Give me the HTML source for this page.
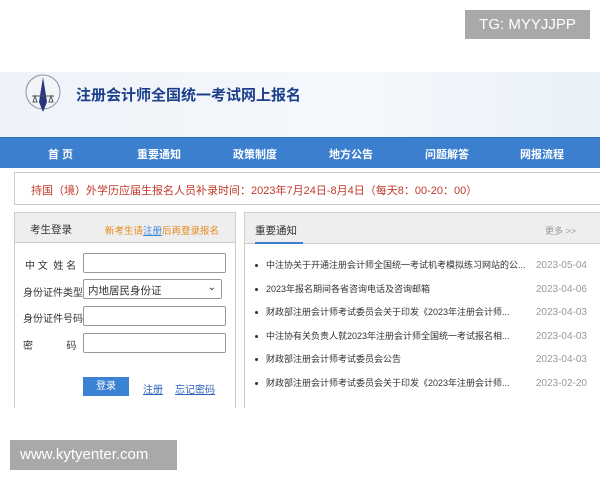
<!DOCTYPE html>
<html><head><meta charset="utf-8"><style>
*{margin:0;padding:0;box-sizing:border-box}
body{width:600px;height:480px;background:#fff;font-family:"Liberation Sans","Noto Sans CJK SC",sans-serif;position:relative;overflow:hidden;font-size:10px;color:#333}
.abs{position:absolute}
#hdr{left:0;top:72px;width:600px;height:66px;background:linear-gradient(90deg,#eef3f9,#f5f8fc 60%,#e9f0f8)}
#nav{left:0;top:137px;width:600px;height:31px;background:#3c7fcf;border-top:1px solid #2f6fbf}
#nav span{position:absolute;top:8px;color:#fff;font-weight:bold;font-size:11px}
#notice{left:14px;top:172px;width:600px;height:33px;border:1px solid #ccc;background:#fff;color:#c0392b;font-size:11px;padding:9px 0 0 16px}
#lp{left:14px;top:212px;width:222px;height:200px;border:1px solid #ccc;border-bottom:none}
#lph{height:30px;background:#eee;border-bottom:1px solid #ccc;position:relative}
#rp{left:244px;top:212px;width:360px;height:200px;border:1px solid #ccc;border-bottom:none}
#rph{height:31px;background:#eee;border-bottom:1px solid #ccc;position:relative}
.lbl{position:absolute;left:8px;font-size:10px;color:#333}
.inp{position:absolute;left:68px;width:143px;height:20px;border:1px solid #999;border-radius:2px;background:#fff}
.row{position:absolute;left:10px;font-size:9px;color:#333;white-space:nowrap}
.row b{display:inline-block;width:3px;height:3px;background:#333;border-radius:50%;margin-right:8px;vertical-align:middle}
.dt{position:absolute;right:16px;color:#999;font-size:10px}
</style></head><body>
<div class="abs" style="left:465px;top:10px;width:125px;height:29px;background:#a9a9a9;color:#fff;font-size:15px;text-align:center;line-height:29px">TG: MYYJJPP</div>
<div id="hdr" class="abs">
<svg class="abs" style="left:25px;top:2px" width="40" height="42" viewBox="0 0 40 42"><circle cx="18" cy="18" r="17" fill="#f2f4f8" stroke="#8890a8" stroke-width="1"/><path d="M18 3 L22 28 L18 38 L14 28Z" fill="#2a3580"/><path d="M7 22 H29 M10 22 L8 28 H12Z M26 22 L24 28 H28Z" stroke="#555" fill="none" stroke-width="1"/></svg>
<div class="abs" style="left:76px;top:12px;font-size:15px;font-weight:bold;color:#1c3f8c">注册会计师全国统一考试网上报名</div>
</div>
<div id="nav" class="abs"><span style="left:48px">首 页</span><span style="left:137px">重要通知</span><span style="left:233px">政策制度</span><span style="left:329px">地方公告</span><span style="left:425px">问题解答</span><span style="left:520px">网报流程</span></div>
<div id="notice" class="abs">持国（境）外学历应届生报名人员补录时间：2023年7月24日-8月4日（每天8：00-20：00）</div>
<div id="lp" class="abs">
<div id="lph"><span class="abs" style="left:15px;top:9px;font-size:10.5px;color:#333">考生登录</span><span class="abs" style="left:90px;top:10px;font-size:9.5px;color:#e8891a">新考生请<u style="color:#3c8ae0">注册</u>后再登录报名</span></div>
<div class="lbl" style="top:44px;left:10px">中 文&nbsp; 姓 名</div><div class="inp" style="top:40px"></div>
<div class="lbl" style="top:71px">身份证件类型</div><div class="inp" style="top:66px;width:139px;padding:3px 4px;font-size:10.5px">内地居民身份证<span class="abs" style="right:5px;top:2px;font-size:10px">⌄</span></div>
<div class="lbl" style="top:97px">身份证件号码</div><div class="inp" style="top:93px"></div>
<div class="lbl" style="top:124px">密&nbsp;&nbsp;&nbsp;&nbsp;&nbsp;&nbsp;&nbsp;&nbsp;&nbsp;&nbsp;&nbsp; 码</div><div class="inp" style="top:120px"></div>
<div class="abs" style="left:68px;top:164px;width:46px;height:19px;background:#3c82d4;color:#fff;text-align:center;line-height:19px;font-size:10px">登录</div>
<u class="abs" style="left:128px;top:168px;color:#2a62b8;font-size:10px">注册</u>
<u class="abs" style="left:160px;top:168px;color:#2a62b8;font-size:10px">忘记密码</u>
</div>
<div id="rp" class="abs">
<div id="rph"><span class="abs" style="left:10px;top:10px;font-size:10.5px;color:#333">重要通知</span><div class="abs" style="left:10px;top:29px;width:48px;height:2px;background:#3c7fcf"></div><span class="abs" style="left:300px;top:11px;font-size:9px;color:#999">更多 &gt;&gt;</span></div>
<div class="row" style="top:45px"><b></b>中注协关于开通注册会计师全国统一考试机考模拟练习网站的公...</div><div class="dt" style="top:47px">2023-05-04</div>
<div class="row" style="top:69px"><b></b>2023年报名期间各省咨询电话及咨询邮箱</div><div class="dt" style="top:71px">2023-04-06</div>
<div class="row" style="top:92px"><b></b>财政部注册会计师考试委员会关于印发《2023年注册会计师...</div><div class="dt" style="top:94px">2023-04-03</div>
<div class="row" style="top:116px"><b></b>中注协有关负责人就2023年注册会计师全国统一考试报名相...</div><div class="dt" style="top:118px">2023-04-03</div>
<div class="row" style="top:139px"><b></b>财政部注册会计师考试委员会公告</div><div class="dt" style="top:141px">2023-04-03</div>
<div class="row" style="top:163px"><b></b>财政部注册会计师考试委员会关于印发《2023年注册会计师...</div><div class="dt" style="top:165px">2023-02-20</div>
</div>
<div class="abs" style="left:0;top:408px;width:600px;height:72px;background:#fff"></div>
<div class="abs" style="left:10px;top:440px;width:167px;height:30px;background:#a9a9a9;color:#fff;font-size:15px;line-height:30px;padding-left:10px">www.kytyenter.com</div>
</body></html>
